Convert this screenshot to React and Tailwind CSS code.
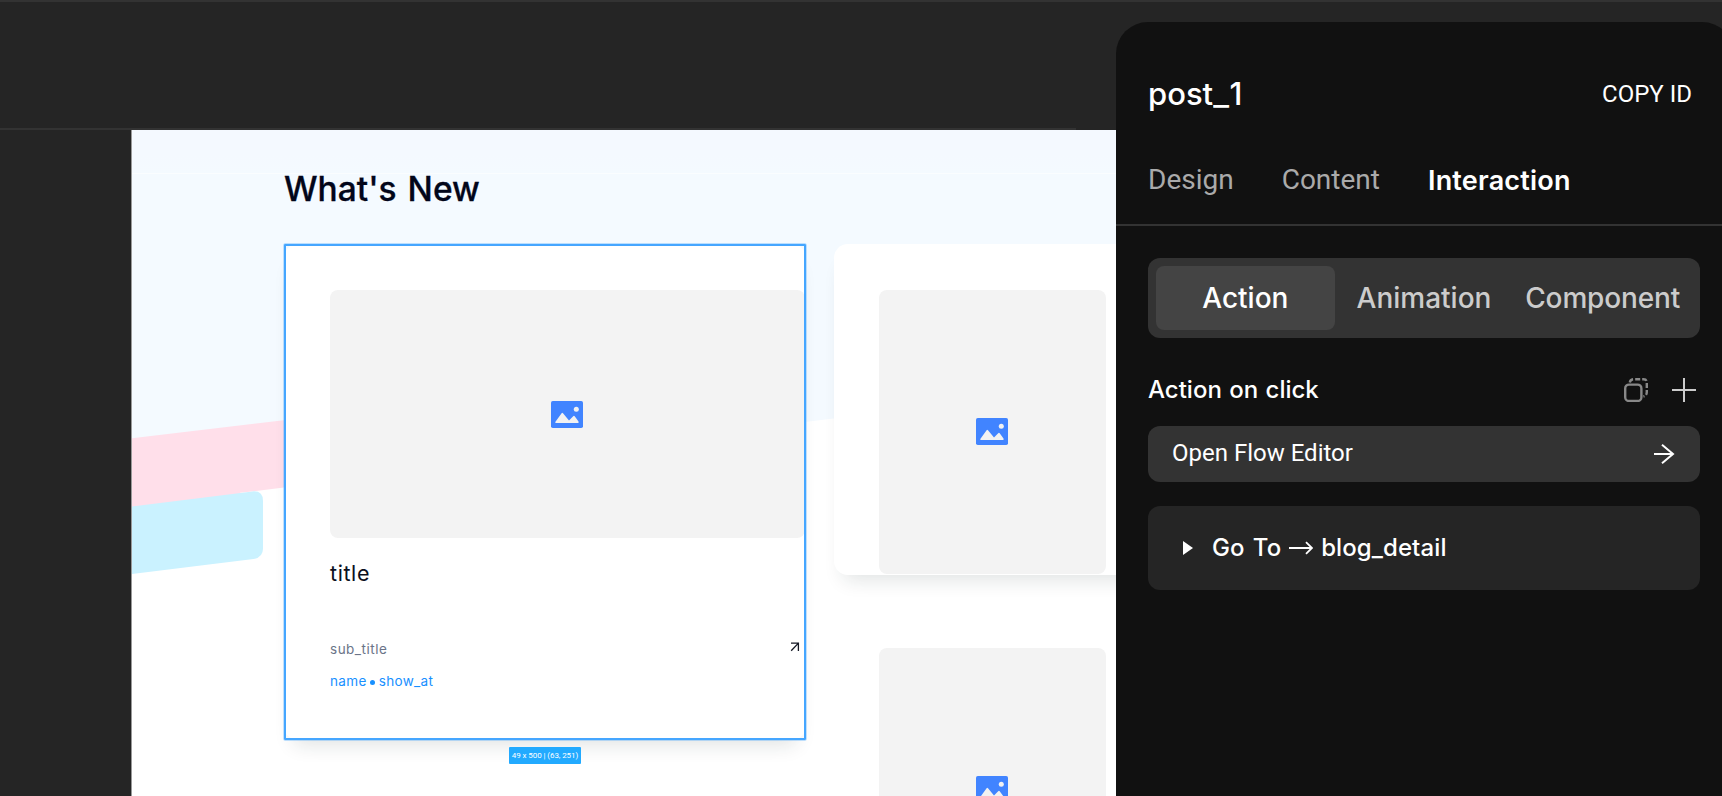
import React from "react";

const INTER = "font-['Inter',sans-serif]";
const ROBOTO = "font-['Roboto',sans-serif]";

function PictureIcon() {
  return (
    <svg className="h-[27px] w-8 shrink-0" viewBox="0 0 32 27">
      <rect x="0" y="0" width="32" height="27" rx="1.8" fill="#4184ff" />
      <circle cx="25.3" cy="8.2" r="2.5" fill="#f2f2f2" />
      <path d="M4.3 21 L10.6 12.2 Q11.3 11.2 12 12.2 L18 19.6 L22.2 15.2 Q23 14.4 23.7 15.2 L27.5 20.4 Q28 21.6 27.2 22 L5 22 Q3.9 21.9 4.3 21Z" fill="#f2f2f2" />
    </svg>
  );
}

function Backdrop() {
  return (
    <svg className="absolute left-0 top-0 h-[666px] w-[984px]" viewBox="132 130 984 666">
      <defs>
        <linearGradient id="strip" x1="0" y1="0" x2="0" y2="1">
          <stop offset="0.6" stopColor="#f4f9ff" />
          <stop offset="1" stopColor="#f4faff" />
        </linearGradient>
      </defs>
      <rect x="132" y="130" width="984" height="43" fill="url(#strip)" />
      <rect x="132" y="173" width="984" height="1" fill="#fafdff" />
      <path d="M132 174 H1116 V384 L807 421.7 L284 480 H132Z" fill="#f4faff" />
      <path d="M132 438.3 L400 406.5 V473 L284 487.7 L132 520Z" fill="#ffdfea" />
      <path d="M284 487.6 L240 492.8 L240 505 L284 505Z" fill="#fff" />
      <path d="M132 506.5 L252.5 491.4 Q263 490.5 263 501 V548.5 Q263 557.5 253.5 559 L132 574Z" fill="#caf2ff" />
    </svg>
  );
}

function SideCards() {
  return (
    <div className="flex w-[282px] shrink-0 flex-col">
      <div className="h-[331px] w-[320px] rounded-[14px] bg-white pl-[45px] pt-[46px] shadow-[0_14px_20px_-10px_rgba(20,40,40,0.14)]">
        <div className="flex h-[284px] w-[227px] items-center justify-center rounded-lg bg-[#f3f3f3] pb-px pr-px">
          <PictureIcon />
        </div>
      </div>
      <div className="ml-[45px] mt-[73px] flex h-[284px] w-[227px] shrink-0 items-center justify-center rounded-lg bg-[#f3f3f3] pb-px pr-px">
        <PictureIcon />
      </div>
    </div>
  );
}

function PostCard() {
  return (
    <div className="relative h-[496px] w-[522px] shrink-0">
      <div className="h-full w-full rounded-[14px] bg-white pl-[46px] pt-[46px] shadow-[0_14px_20px_-10px_rgba(20,40,40,0.14)]">
        <div className="flex h-[248px] w-[475px] items-center justify-center rounded-lg bg-[#f3f3f3] pr-[2px]">
          <PictureIcon />
        </div>
        <div className={`${INTER} mt-[21px] text-[21.5px] leading-[28px] tracking-[0.6px] text-[#0b1020]`}>title</div>
        <div className="mt-[52px] flex h-[20px] w-[470px] justify-between">
          <span className={`${INTER} text-[13.5px] leading-[20px] tracking-[0.5px] text-[#6b7488]`}>sub_title</span>
          <svg className="mt-[3px] h-[10px] w-[10px]" viewBox="0 0 10 10" fill="none" stroke="#141824" strokeWidth="1.3">
            <path d="M1 1.2 H8.4 V9 M8.2 1.4 L1.2 8.8" />
          </svg>
        </div>
        <div className={`${INTER} mt-3 flex h-[20px] items-center text-[13.5px] leading-[20px] tracking-[0.35px] text-[#1890ff]`}>
          <span>name</span>
          <span className="ml-[3px] mr-1 mt-[2px] h-[5px] w-[5px] rounded-full bg-[#1890ff]" />
          <span>show_at</span>
        </div>
      </div>
      <div className="absolute inset-0 rounded-[1px] border-2 border-[#45a6ff] shadow-[0_0_0_0.7px_rgba(69,166,255,0.45)]" />
      <div className="absolute left-[225px] top-[503px] flex h-[17px] w-[72px] items-center justify-center rounded-[1px] bg-[#22aaff]">
        <span className={`${ROBOTO} whitespace-nowrap text-[8px] leading-none tracking-[-0.08px] text-white`}>49 x 500 | (63, 251)</span>
      </div>
    </div>
  );
}

function Canvas() {
  return (
    <div className="flex w-[1116px] shrink-0 flex-col">
      <div className="h-[126px] shrink-0" />
      <div className="h-0.5 w-[1076px] shrink-0 bg-[#333]" />
      <div className="flex h-[666px] shrink-0">
        <div className="w-[132px] shrink-0 border-r border-[#999]" />
        <div className="relative h-[666px] w-[984px] overflow-hidden bg-white">
          <Backdrop />
          <div className="relative pl-[152px] pt-[37px]">
            <h1 className={`${INTER} h-[77px] text-[33.5px] font-medium leading-[44px] text-[#02061a] [-webkit-text-stroke:0.3px_#02061a] [word-spacing:2px]`}>What's New</h1>
            <div className="flex gap-[28px]">
              <PostCard />
              <SideCards />
            </div>
          </div>
        </div>
      </div>
    </div>
  );
}

function Panel() {
  return (
    <div className="mt-5 flex w-[618px] shrink-0 flex-col rounded-t-[32px] bg-[#111] text-white">
      <div className="flex h-[124px] w-[606px] items-center justify-between pl-8 pr-[30px] pt-5">
        <span className={`${INTER} text-[31px] font-medium leading-9`}>
          post<span className="mx-px inline-block scale-x-110">_</span>1
        </span>
        <span className={`${ROBOTO} text-[24px] leading-7`}>COPY ID</span>
      </div>
      <div className="flex h-[78px] shrink-0 items-start gap-12 pl-8 pt-[18px] text-[28px] leading-8">
        <span className={`${ROBOTO} text-[#aaa]`}>Design</span>
        <span className={`${ROBOTO} text-[#aaa]`}>Content</span>
        <span className={`${INTER} mt-px text-[27px] font-semibold tracking-[0.2px]`}>Interaction</span>
      </div>
      <div className="h-0.5 shrink-0 bg-[#333]" />
      <div className="flex w-[616px] flex-col pl-8 pr-8 pt-8">
        <div className={`${INTER} grid h-20 grid-cols-3 items-center rounded-xl bg-[#333] p-2 text-center text-[28px] font-medium text-[#ccc]`}>
          <div className="flex h-16 items-center justify-center rounded-lg bg-[#444] text-white">Action</div>
          <div className="flex h-16 items-center justify-center">Animation</div>
          <div className="flex h-16 items-center justify-center tracking-[-0.15px]">Component</div>
        </div>
        <div className="flex h-[88px] items-center justify-between pr-1 pt-4">
          <span className={`${INTER} text-[24px] font-medium leading-8 [word-spacing:1px]`}>Action on click</span>
          <div className="flex items-center gap-6">
            <svg className="h-6 w-6" viewBox="0 0 24 24" fill="none" stroke="#888" strokeWidth="2.4">
              <rect x="1.2" y="6.6" width="16.2" height="16.4" rx="3.8" />
              <path d="M5.8 4.5 Q6.3 1.2 10 1.2 H19.5 Q22.8 1.2 22.8 4.5 V14 Q22.8 17.8 19.4 18.3" strokeDasharray="5 2" />
            </svg>
            <svg className="h-6 w-6" viewBox="0 0 24 24" stroke="#ccc" strokeWidth="2">
              <path d="M12 0 V24 M0 12 H24" />
            </svg>
          </div>
        </div>
        <div className="flex h-14 items-center justify-between rounded-xl bg-[#333] pl-6 pr-[25px]">
          <span className={`${ROBOTO} -mt-0.5 text-[24px] leading-7`}>Open Flow Editor</span>
          <svg className="h-5 w-[21px]" viewBox="0 0 21 20" fill="none" stroke="#fff" strokeWidth="2">
            <path d="M0 10 H19 M8 0.8 L19 10 L8 19.2" />
          </svg>
        </div>
        <div className={`${INTER} mt-6 flex h-[84px] items-center rounded-xl bg-[#252525] pl-[35px] text-[24px] font-medium leading-8`}>
          <svg className="mr-[19px] h-[14px] w-[10px]" viewBox="0 0 10 14"><path d="M0 0 V14 L10 7Z" fill="#fff" /></svg>
          <span className="[word-spacing:2px]">Go To</span>
          <svg className="mx-2 h-[14px] w-6" viewBox="0 0 24 14" fill="none" stroke="#fff" strokeWidth="1.8">
            <path d="M0 7 H22.5 M17 1.2 L23 7 L17 12.8" />
          </svg>
          <span className="tracking-[0.1px]">blog_detail</span>
        </div>
      </div>
    </div>
  );
}

export default function App() {
  return (
    <div className="flex h-[796px] w-[1722px] flex-col overflow-hidden bg-[#252525]">
      <div className="h-0.5 shrink-0 bg-[#333]" />
      <div className="flex min-h-0 flex-1">
        <Canvas />
        <Panel />
      </div>
    </div>
  );
}
